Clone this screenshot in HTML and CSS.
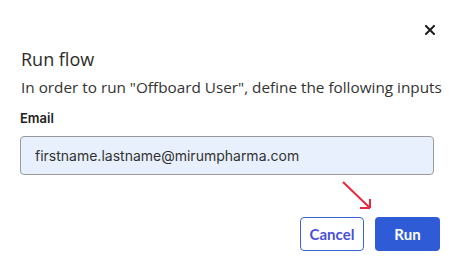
FILE: index.html
```html
<!DOCTYPE html>
<html lang="en">
<head>
    <meta charset="UTF-8">
    <title>Run flow</title>
    <link rel="stylesheet" href="styles.css">
</head>
<body>

<div class="dialog">
    <div class="dialog-top">
        <button class="close-btn" aria-label="Close">
            <svg width="10" height="10" viewBox="0 0 10 10">
                <path d="M1 1 L9 9 M9 1 L1 9" stroke="#1f1f1f" stroke-width="2" stroke-linecap="square"/>
            </svg>
        </button>
    </div>

    <h2 class="title">Run flow</h2>
    <p class="desc">In order to run "Offboard User", define the following inputs</p>

    <label class="field-label" for="email">Email</label>
    <input class="field-input" id="email" type="text" value="firstname.lastname@mirumpharma.com">

    <div class="actions">
        <!-- annotation arrow pointing to Run -->
        <svg class="hint-arrow" width="30" height="30" viewBox="0 0 30 30">
            <path d="M1 1 L28 27 M28 27 L28 18 M28 27 L18 27" stroke="#e8283c" stroke-width="2" fill="none"/>
        </svg>
        <button class="btn btn-outline">Cancel</button>
        <button class="btn btn-primary">Run</button>
    </div>
</div>

</body>
</html>
```

FILE: styles.css
```css
body {
    margin: 0;
    padding: 0;
    background: #ffffff;
    font-family: 'Open Sans', sans-serif;
    color: #2b2b2b;
}
.dialog {
    width: 460px;
    height: 272px;
    padding: 0 26px 0 20px;
    box-sizing: border-box;
}
.dialog-top {
    display: flex;
    justify-content: flex-end;
    padding-top: 25px;
    height: 10px;
}
.close-btn {
    background: none;
    border: none;
    padding: 0;
    margin-right: -1px;
    width: 10px;
    height: 10px;
    display: block;
    cursor: pointer;
}
.close-btn svg {
    display: block;
}
.title {
    margin: 12px 0 0 1px;
    font-size: 18px;
    font-weight: 400;
    line-height: 24px;
    color: #2b2b2b;
}
.desc {
    margin: 5px 0 0 1px;
    font-size: 15.3px;
    line-height: 22px;
    color: #333333;
    white-space: nowrap;
}
.field-label {
    display: block;
    margin-top: 11px;
    font-family: 'Inter', sans-serif;
    font-size: 13px;
    font-weight: 600;
    line-height: 18px;
    color: #222222;
}
.field-input {
    display: block;
    width: 100%;
    box-sizing: border-box;
    height: 39px;
    margin-top: 9px;
    padding: 0 14px;
    font-family: 'Inter', sans-serif;
    font-size: 14px;
    color: #333333;
    background: #e8f0fe;
    border: 1px solid #9a9a9a;
    border-radius: 4px;
    outline: none;
}
.actions {
    position: relative;
    display: flex;
    justify-content: flex-end;
    gap: 11px;
    margin-top: 42px;
    margin-right: -6px;
}
.hint-arrow {
    position: absolute;
    right: 68px;
    top: -36px;
}
.btn {
    height: 34px;
    border-radius: 4px;
    font-family: 'Lato', sans-serif;
    font-size: 15px;
    font-weight: 700;
    cursor: pointer;
    box-sizing: border-box;
}
.btn-outline {
    width: 64px;
    background: #ffffff;
    color: #4a4fd6;
    border: 1px solid #3b64d8;
}
.btn-primary {
    width: 65px;
    background: #2f5cd6;
    color: #ffffff;
    border: none;
}
```
